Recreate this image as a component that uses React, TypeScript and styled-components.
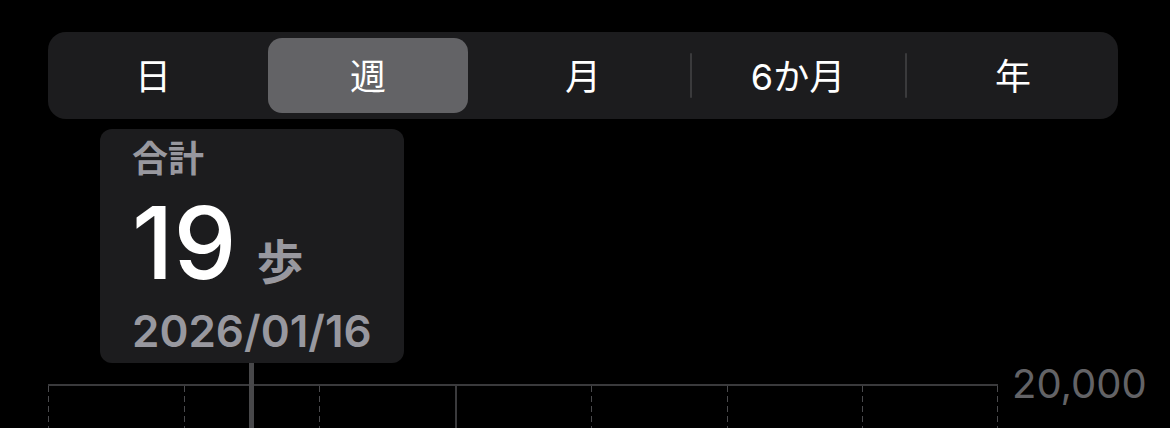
import React from 'react';
import styled, { createGlobalStyle } from 'styled-components';

const GlobalStyle = createGlobalStyle`
  html, body {
    margin: 0;
    padding: 0;
    background: #000;
    height: 428px;
    overflow: hidden;
  }
  body {
    font-family: Inter, "Noto Sans CJK JP", sans-serif;
    color: #fff;
  }
`;

const Page = styled.div`
  padding: 32px 0 0 48px;
  width: 1122px;
`;

const Segmented = styled.div`
  width: 1070px;
  height: 87px;
  box-sizing: border-box;
  padding: 6px 5px;
  background: #1c1c1e;
  border-radius: 18px;
  display: flex;
`;

const Segment = styled.div<{ $active?: boolean }>`
  flex: 1;
  display: flex;
  align-items: center;
  justify-content: center;
  padding-bottom: 4px;
  border-radius: 14px;
  background: ${(p) => (p.$active ? '#636366' : 'transparent')};
  font-size: 36px;
  font-weight: 400;
  color: #fff;
`;

const Gap = styled.div`
  width: 15px;
  display: flex;
  align-items: center;
  justify-content: center;
`;

const Divider = styled.div<{ $visible?: boolean }>`
  width: 2px;
  height: 45px;
  border-radius: 1px;
  background: ${(p) => (p.$visible ? '#3a3a3c' : 'transparent')};
`;

const Card = styled.div`
  margin: 10px 0 0 52px;
  width: 304px;
  height: 234px;
  box-sizing: border-box;
  padding: 10px 0 0 32px;
  background: #1c1c1e;
  border-radius: 12px;
`;

const Caption = styled.div`
  font-size: 36px;
  line-height: 40px;
  font-weight: 700;
  color: #98989f;
`;

const ValueRow = styled.div`
  margin-top: 14px;
  display: flex;
  align-items: baseline;
  gap: 20px;
  height: 100px;
`;

const Value = styled.span`
  font-size: 100px;
  line-height: 100px;
  font-weight: 500;
  color: #fff;
`;

const Unit = styled.span`
  font-size: 47px;
  font-weight: 700;
  color: #98989f;
`;

const DateText = styled.div`
  margin-top: 14px;
  font-size: 44px;
  line-height: 48px;
  font-weight: 600;
  color: #98989f;
`;

const ChartRow = styled.div`
  margin-top: 21px;
  display: flex;
  align-items: flex-start;
`;

const Grid = styled.div`
  position: relative;
  width: 950px;
  height: 120px;
  display: flex;
  border-top: 2px solid #3a3a3c;
`;

const dashed = `repeating-linear-gradient(to bottom, #4a4a4d 0 6px, transparent 6px 10px)`;

const Cell = styled.div<{ $solid?: boolean; $last?: boolean }>`
  flex: 1;
  background-image: ${(p) => (p.$solid ? 'linear-gradient(#3a3a3c, #3a3a3c)' : dashed)}
    ${(p) => (p.$last ? `, ${dashed}` : '')};
  background-size: ${(p) => (p.$solid ? '2px' : '1px')} 100% ${(p) => (p.$last ? ', 1px 100%' : '')};
  background-position: left top ${(p) => (p.$last ? ', right top' : '')};
  background-repeat: no-repeat;
`;

const Stem = styled.div`
  position: absolute;
  left: 201px;
  top: -23px;
  width: 5px;
  height: 120px;
  background: #48484a;
`;

const AxisLabel = styled.span`
  margin-left: 14px;
  transform: translateY(-50%);
  font-size: 40px;
  line-height: 48px;
  font-weight: 400;
  color: #636366;
`;

const tabs = ['日', '週', '月', '6か月', '年'];
const activeTab = 1;

const App: React.FC = () => {
  return (
    <>
      <GlobalStyle />
      <Page>
        <Segmented>
          {tabs.map((t, i) => (
            <React.Fragment key={t}>
              {i > 0 && (
                <Gap>
                  <Divider $visible={i !== activeTab && i - 1 !== activeTab} />
                </Gap>
              )}
              <Segment $active={i === activeTab}>{t}</Segment>
            </React.Fragment>
          ))}
        </Segmented>

        <Card>
          <Caption>合計</Caption>
          <ValueRow>
            <Value>19</Value>
            <Unit>歩</Unit>
          </ValueRow>
          <DateText>2026/01/16</DateText>
        </Card>

        <ChartRow>
          <Grid>
            {Array.from({ length: 7 }).map((_, i) => (
              <Cell key={i} $solid={i === 3} $last={i === 6} />
            ))}
            <Stem />
          </Grid>
          <AxisLabel>20,000</AxisLabel>
        </ChartRow>
      </Page>
    </>
  );
};

export default App;
